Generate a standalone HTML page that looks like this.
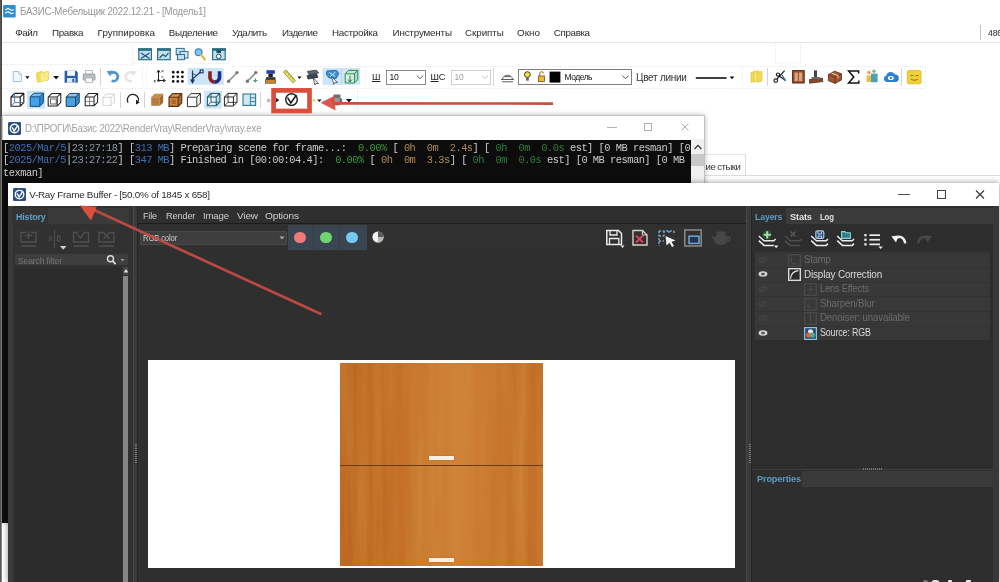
<!DOCTYPE html>
<html lang="ru">
<head>
<meta charset="utf-8">
<title>БАЗИС-Мебельщик – V-Ray Frame Buffer</title>
<style>
html,body{margin:0;padding:0;background:#fff;}
body{width:1000px;height:582px;overflow:hidden;position:relative;font-family:"Liberation Sans",sans-serif;font-size:10px;color:#222;}
#root{position:absolute;left:0;top:0;width:1000px;height:582px;overflow:hidden;background:#fff;filter:blur(0.4px);}
.a{position:absolute;}
.t{position:absolute;white-space:pre;line-height:1;}
.mi{position:absolute;top:26.7px;white-space:pre;line-height:12px;font-size:9.8px;color:#2a2a2a;letter-spacing:-0.25px;}
svg{position:absolute;overflow:visible;}
/* console */
#con{position:absolute;left:2px;top:115px;width:703px;height:407px;background:#fff;box-shadow:0 0 5px rgba(0,0,0,.28);outline:1px solid #c2c2c2;outline-offset:-1px;}
#conbody{position:absolute;left:0;top:24.6px;width:689px;height:383px;background:#0c0c0c;overflow:hidden;}
.cl{position:absolute;left:1px;margin-top:-0.6px;white-space:pre;font-family:"Liberation Mono",monospace;font-size:10.4px;letter-spacing:-0.51px;line-height:12px;color:#ccc;}
.cb{color:#3f6fb0}.cg{color:#8b97a8}.cgr{color:#3c9a3c}.co{color:#b08a55}.cdg{color:#2f7d3a}.cw{color:#d0d0d0}
/* vfb */
#vfb{position:absolute;left:8px;top:183px;width:991px;height:399px;background:#2f2f2f;box-shadow:0 0 6px rgba(0,0,0,.45);}
.vt{position:absolute;white-space:pre;line-height:1;font-size:10.5px;color:#cfcfcf;}
</style>
</head>
<body>
<div id="root">
<!-- ===== main app ===== -->
<div id="app" class="a" style="left:0;top:0;width:1000px;height:582px;background:#fff;">
  <div class="a" style="left:0;top:0;width:1px;height:582px;background:#5a5550;"></div>
  <div class="a" style="left:1px;top:0;width:1px;height:582px;background:#4a4642;"></div>
  <div class="a" style="left:1px;top:116px;width:1px;height:466px;background:#8c8c8c;"></div>
  <!-- title -->
  <svg id="appicon" width="12.8" height="12.6" style="left:3px;top:5.2px;" viewBox="0 0 13 13"><rect width="13" height="13" rx="1.2" fill="#2f8ecf"/><path d="M2.2 5.2 C4.2 3.2 5.8 3.4 7 4.6 C8.2 5.8 9.4 5.8 10.8 4.4 M2.2 8.6 C4.2 6.6 5.8 6.8 7 8 C8.2 9.2 9.4 9.2 10.8 7.8" fill="none" stroke="#fff" stroke-width="1.1"/></svg>
  <div class="t" id="apptitle" style="transform:scaleX(0.931);transform-origin:0 0;left:19.8px;top:6.9px;font-size:10.4px;color:#969696;letter-spacing:-0.2px;">БАЗИС-Мебельщик 2022.12.21 - [Модель1]</div>
  <!-- menu -->
  <div id="menu">
    <span class="mi" id="m0" style="left:15.2px;letter-spacing:-0.43px;">Файл</span>
    <span class="mi" id="m1" style="left:52px;letter-spacing:-0.32px;">Правка</span>
    <span class="mi" id="m2" style="left:97.6px;letter-spacing:0.03px;">Группировка</span>
    <span class="mi" id="m3" style="left:168.8px;letter-spacing:-0.33px;">Выделение</span>
    <span class="mi" id="m4" style="left:232px;letter-spacing:-0.4px;">Удалить</span>
    <span class="mi" id="m5" style="left:282px;letter-spacing:-0.47px;">Изделие</span>
    <span class="mi" id="m6" style="left:332px;letter-spacing:-0.28px;">Настройка</span>
    <span class="mi" id="m7" style="left:392.5px;letter-spacing:-0.16px;">Инструменты</span>
    <span class="mi" id="m8" style="left:465px;letter-spacing:-0.06px;">Скрипты</span>
    <span class="mi" id="m9" style="left:517px;letter-spacing:0.08px;">Окно</span>
    <span class="mi" id="m10" style="left:553.8px;letter-spacing:-0.36px;">Справка</span>
    <span class="mi" style="left:988px;font-size:8.7px;letter-spacing:-0.2px;top:27.2px;">486</span>
    <div class="a" style="left:979.5px;top:25px;width:1px;height:15px;background:#c4c4c4;"></div>
  </div>
  <div class="a" style="left:2px;top:42px;width:998px;height:1px;background:#e6e6e6;"></div>

  <!-- combos and labels row 2 -->
  <div class="t" style="left:372px;top:72.8px;font-size:9.2px;text-decoration:underline;color:#222;">Ш</div>
  <div class="a" style="left:386px;top:70px;width:40px;height:14.5px;border:1px solid #8a8a8a;box-sizing:border-box;background:#fff;"></div>
  <div class="t" style="left:389.5px;top:73.2px;font-size:8.6px;color:#111;letter-spacing:-0.3px;">10</div>
  <div class="t" style="left:430.5px;top:72.8px;font-size:9.2px;color:#222;letter-spacing:-0.3px;"><span style="text-decoration:underline">Ш</span>С</div>
  <div class="a" style="left:451px;top:70px;width:39.5px;height:14.5px;border:1px solid #d0d0d0;box-sizing:border-box;background:#fff;"></div>
  <div class="t" style="left:454.5px;top:73.2px;font-size:8.6px;color:#a0a0a0;letter-spacing:-0.3px;">10</div>
  <div class="a" style="left:517.5px;top:68.5px;width:114px;height:16px;border:1px solid #7f7f7f;box-sizing:border-box;background:#fff;"></div>
  <div class="t" id="t_model" style="left:564.6px;top:73.4px;font-size:8.5px;color:#111;letter-spacing:-0.52px;">Модель</div>
  <div class="t" id="t_cvet" style="left:636px;top:72.8px;font-size:10px;color:#333;letter-spacing:-0.26px;">Цвет линии</div>
<svg id="tbsvg" width="1000" height="74" style="left:0;top:42px;" viewBox="0 42 1000 74">
<g stroke="#e4e4e4" stroke-width="1" stroke-dasharray="1 1.5" fill="none">
<path d="M132.5 45 V63"/><path d="M133 63.5 H230"/><path d="M229.5 45 V63"/>
<path d="M2 64.5 H133"/><path d="M2 88.5 H925"/><path d="M142.5 67 V87"/><path d="M146.5 67 V87"/><path d="M365.5 67 V87"/><path d="M742.5 67 V87"/><path d="M925.5 66 V88"/><path d="M230 66.5 H925"/>
<path d="M775.5 43 V63 H800.5 V43"/>
</g>
<rect x="138.79999999999998" y="48.9" width="12.6" height="10.8" fill="#bfe0f2" stroke="#2d6f86" stroke-width="1.2"/><rect x="138.2" y="48.3" width="13.8" height="2.6" fill="#2d6f86"/><path d="M141 53 L149.5 58.5 M149.5 53 L141 58.5" stroke="#1f4f66" stroke-width="1.1"/>
<rect x="157.6" y="48.9" width="12.6" height="10.8" fill="#bfe0f2" stroke="#2d6f86" stroke-width="1.2"/><rect x="157" y="48.3" width="13.8" height="2.6" fill="#2d6f86"/><path d="M159.5 58 L163 54.5 L165.5 56.5 L168.5 52.8" stroke="#1f4f66" stroke-width="1.1" fill="none"/>
<g><rect x="176.2" y="48.4" width="8" height="6.5" fill="#bfe0f2" stroke="#2d6f86" stroke-width="1"/><rect x="180" y="51.6" width="8" height="6.5" fill="#cfe8f5" stroke="#2d6f86" stroke-width="1"/><rect x="177.5" y="54.5" width="7" height="5.2" fill="#bfe0f2" stroke="#2d6f86" stroke-width="1"/></g>
<g><circle cx="198.6" cy="52.2" r="3.4" fill="#7fc4ee" stroke="#3f86bd" stroke-width="1.2"/><path d="M201 55 L205 59.5" stroke="#e0b84a" stroke-width="2.2" stroke-linecap="round"/></g>
<rect x="212.6" y="48.9" width="12.6" height="10.8" fill="#bfe0f2" stroke="#2d6f86" stroke-width="1.2"/><rect x="212" y="48.3" width="13.8" height="2.6" fill="#2d6f86"/><rect x="216.4" y="49.8" width="4.6" height="3.2" fill="#1f4f66"/><circle cx="218.7" cy="56.4" r="2.3" fill="#f5f5f5" stroke="#1f4f66" stroke-width="1"/>
<path d="M13.2 71.5 H18.8 L21.4 74.2 V81.6 H13.2 Z" fill="#f1f8fd" stroke="#9fc3de" stroke-width="1"/><path d="M18.8 71.5 V74.2 H21.4" fill="#d7e9f5" stroke="#9fc3de" stroke-width="0.8"/>
<path d="M25.3 76.3 H29.5 L27.4 78.9 Z" fill="#111"/>
<path d="M36.4 73.2 L42 71.2 L42.8 72.6 L48.4 71.4 L48.4 80 L37.4 82.2 Z" fill="#f2dc5c" stroke="#e4c83c" stroke-width="0.8"/><path d="M40.5 73.6 L48.4 71.6 V80 L40.8 81.6 Z" fill="#f8e98a"/>
<path d="M53.2 76 H59 L56.1 79.4 Z" fill="#111"/>
<path d="M64.6 70.8 H76 L77.8 72.6 V82.8 H64.6 Z" fill="#2c5f9e"/><rect x="67.2" y="70.8" width="7.8" height="5" fill="#f4f7fb"/><rect x="67" y="78" width="8.4" height="4.8" fill="#dfe8f2"/><rect x="72.3" y="78.6" width="2" height="3.6" fill="#2c5f9e"/>
<rect x="85.6" y="70.6" width="7" height="4" fill="#fafafa" stroke="#a9b0b6" stroke-width="0.8"/><rect x="83.2" y="74" width="11.8" height="6.2" rx="1" fill="#b8bfc6" stroke="#8e969d" stroke-width="0.8"/><rect x="85.6" y="78" width="7" height="4.4" fill="#fafafa" stroke="#a9b0b6" stroke-width="0.8"/>
<path d="M100.5 68 V86" stroke="#d5d5d5" stroke-width="1"/>
<path d="M110 73.2 C115.5 70.6 119.2 74.6 117.4 78.6 C116.4 80.8 113.6 81.6 111.6 80.8" fill="none" stroke="#4d95cc" stroke-width="2.6"/><path d="M106.6 71.2 L112.6 70.6 L110.4 76.6 Z" fill="#4d95cc"/>
<path d="M133.6 73.2 C128.1 70.6 124.4 74.6 126.2 78.6 C127.2 80.8 130 81.6 132 80.8" fill="none" stroke="#e3e5e7" stroke-width="2.6"/><path d="M137 71.2 L131 70.6 L133.2 76.6 Z" fill="#e3e5e7"/>
<g stroke="#222" stroke-width="1" fill="none"><path d="M158.5 71 V80.5 H164.5"/><path d="M157 72.5 L158.5 70 L160 72.5 M163 79 L165.5 80.5 L163 82"/></g><circle cx="158.5" cy="80.5" r="1.3" fill="#222"/><g font-size="4.5" font-family="Liberation Sans, sans-serif" fill="#222"></g><path d="M161.5 70.2 l2 2 m0 -2 l-2 2 M154 80 l1.6 2.4 m0 -2.4 l-1.6 2.4 M161 77 l2.4 0" stroke="#333" stroke-width="0.7"/>
<circle cx="173.2" cy="72.2" r="1.35" fill="#111"/>
<circle cx="173.2" cy="76.8" r="1.35" fill="#111"/>
<circle cx="173.2" cy="81.4" r="1.35" fill="#111"/>
<circle cx="177.79999999999998" cy="72.2" r="1.35" fill="#111"/>
<circle cx="177.79999999999998" cy="76.8" r="1.35" fill="#111"/>
<circle cx="177.79999999999998" cy="81.4" r="1.35" fill="#111"/>
<circle cx="182.39999999999998" cy="72.2" r="1.35" fill="#111"/>
<circle cx="182.39999999999998" cy="76.8" r="1.35" fill="#111"/>
<circle cx="182.39999999999998" cy="81.4" r="1.35" fill="#111"/>
<rect x="187.7" y="68" width="36" height="16.8" fill="#cde5f7"/>
<g stroke="#1d3a6e" fill="none" stroke-width="1.2"><path d="M192.5 70.5 V82"/><path d="M190.7 79.5 L192.5 82.8 L194.3 79.5" fill="#1d3a6e"/><path d="M192.5 79 L200.5 72"/><rect x="200.2" y="70" width="2.8" height="2.8" fill="#fff"/><path d="M193 74 A6 6 0 0 1 197 76" stroke-width="0.8"/></g>
<path d="M210 71.2 V78 A4.7 4.7 0 0 0 214.8 82 " fill="none" stroke="#8b1f24" stroke-width="3.6"/><path d="M219.5 71.2 V78 A4.7 4.7 0 0 1 214.7 82" fill="none" stroke="#1c2a8c" stroke-width="3.6"/>
<path d="M228.4 81.4 L237.2 72.4" stroke="#8a8a8a" stroke-width="1.5"/><circle cx="228.6" cy="81.2" r="1.7" fill="#777"/><circle cx="237" cy="72.6" r="1.7" fill="#777"/>
<path d="M247.2 81.4 L256 72.4" stroke="#8a8a8a" stroke-width="1.5"/><circle cx="247.4" cy="81.2" r="1.7" fill="#777"/><circle cx="255.8" cy="72.6" r="1.7" fill="#777"/><path d="M255.4 78.6 V82.6 M253.4 80.6 H257.4" stroke="#3f9e6a" stroke-width="1.2"/>
<rect x="266.4" y="70.2" width="8.4" height="3.6" fill="#2b3fa8"/><rect x="268.4" y="73.8" width="4.4" height="3.4" fill="#222"/><rect x="266" y="77.2" width="9.4" height="2.6" fill="#333"/><rect x="265.6" y="79.8" width="10" height="3.4" fill="#d58a2c" stroke="#333" stroke-width="0.6"/>
<path d="M283.4 72 L285.8 70 L295.4 80.6 L293 82.8 Z" fill="#f0e060" stroke="#8a8a30" stroke-width="0.9"/><path d="M286 72.6 l1.4 -1.2 M288 74.8 l1.4 -1.2 M290 77 l1.4 -1.2 M292 79.2 l1.4 -1.2" stroke="#6a6a20" stroke-width="0.7"/>
<path d="M297.4 76.4 H301.6 L299.5 79 Z" fill="#111"/>
<path d="M307.4 71.4 L316.4 70.2 L318.6 73 L309 74.6 Z" fill="#5a6a7a" stroke="#222" stroke-width="0.7"/><path d="M307 75.6 L316.6 74 L318 77.4 L308 79 Z" fill="#3a4a5a" stroke="#222" stroke-width="0.7"/><path d="M313 77.5 L318.5 83.5 L316 83.3 L315 85 Z" fill="#fff" stroke="#222" stroke-width="0.7"/>
<rect x="322.5" y="68" width="37.5" height="16.8" fill="#cde5f7"/><path d="M341.5 68 V84.8" stroke="#b5d4ea" stroke-width="0.8"/>
<path d="M327 71 L336.4 70.4 L338.8 73.4 L336 78.6 L329 77.8 L326.4 74.4 Z" fill="#3d8fd6" stroke="#1e5fa0" stroke-width="0.9"/><path d="M329.5 72.5 L335 76.5 M335.5 72 L330 76.8" stroke="#d8ecfa" stroke-width="1"/><path d="M331.5 76.5 L337.6 82.6 L334.8 82.6 L333.8 84.4 Z" fill="#fff" stroke="#1e3a5a" stroke-width="0.7"/>
<path d="M345.2 73.80000000000001 L348.59999999999997 70.4 H357.79999999999995 L354.4 73.80000000000001 Z" fill="#c2e8d2"/><path d="M354.4 73.80000000000001 L357.79999999999995 70.4 V79.60000000000001 L354.4 83.00000000000001 Z" fill="#a8dcc0"/><rect x="345.2" y="73.80000000000001" width="9.2" height="9.2" fill="#d9f2e4"/><path d="M345.2 73.80000000000001 H354.4 V83.00000000000001 H345.2 Z M345.2 73.80000000000001 L348.59999999999997 70.4 H357.79999999999995 L354.4 73.80000000000001 M357.79999999999995 70.4 V79.60000000000001 L354.4 83.00000000000001" fill="none" stroke="#2d8a5a" stroke-width="1.0" stroke-linejoin="round"/>
<path d="M350 75.5 V81.5 M348.2 79.6 L350 82 L351.8 79.6" stroke="#1f5a3c" stroke-width="0.9" fill="none"/>
<path d="M11 97.0 H20.2 V106.2 H11 Z M11 97.0 L14.6 93.4 H23.799999999999997 L20.2 97.0 M23.799999999999997 93.4 V102.60000000000001 L20.2 106.2" fill="none" stroke="#1b1b1b" stroke-width="1.15" stroke-linejoin="round"/><path d="M14.6 93.4 V102.60000000000001 H23.799999999999997 M14.6 102.60000000000001 L11 106.2" fill="none" stroke="#3b7fb8" stroke-width="0.9774999999999999"/>
<rect x="27" y="90.7" width="18" height="18" fill="#cde5f7"/>
<path d="M30.2 96.8 L33.8 93.2 H43.4 L39.8 96.8 Z" fill="#6fbdf2"/><path d="M39.8 96.8 L43.4 93.2 V102.8 L39.8 106.39999999999999 Z" fill="#2f8ad0"/><rect x="30.2" y="96.8" width="9.6" height="9.6" fill="#3fa2ea"/><path d="M30.2 96.8 H39.8 V106.39999999999999 H30.2 Z M30.2 96.8 L33.8 93.2 H43.4 L39.8 96.8 M43.4 93.2 V102.8 L39.8 106.39999999999999" fill="none" stroke="#1b4b78" stroke-width="1.0" stroke-linejoin="round"/>
<path d="M48.2 97.0 H57.2 V106.0 H48.2 Z M48.2 97.0 L51.800000000000004 93.4 H60.800000000000004 L57.2 97.0 M60.800000000000004 93.4 V102.4 L57.2 106.0" fill="none" stroke="#222" stroke-width="1.05" stroke-linejoin="round"/>
<rect x="50.6" y="99" width="5.6" height="5" fill="none" stroke="#444" stroke-width="0.8"/>
<path d="M66.2 97.0 L69.8 93.4 H79.2 L75.60000000000001 97.0 Z" fill="#8ac6ee"/><path d="M75.60000000000001 97.0 L79.2 93.4 V102.80000000000001 L75.60000000000001 106.4 Z" fill="#3b8ccc"/><rect x="66.2" y="97.0" width="9.4" height="9.4" fill="#4aa3de"/><path d="M66.2 97.0 H75.60000000000001 V106.4 H66.2 Z M66.2 97.0 L69.8 93.4 H79.2 L75.60000000000001 97.0 M79.2 93.4 V102.80000000000001 L75.60000000000001 106.4" fill="none" stroke="#1b3b58" stroke-width="1.0" stroke-linejoin="round"/>
<path d="M85.2 97.0 H94.0 V105.8 H85.2 Z M85.2 97.0 L88.8 93.4 H97.6 L94.0 97.0 M97.6 93.4 V102.2 L94.0 105.8" fill="none" stroke="#222" stroke-width="1.05" stroke-linejoin="round"/>
<path d="M89.6 97 V105.8 M85.2 101.4 H94" stroke="#555" stroke-width="0.7"/>
<path d="M103 97.4 H111 V105.4 H103 Z M103 97.4 L106.4 94 H114.4 L111 97.4 M114.4 94 V102 L111 105.4" fill="none" stroke="#d2d2d2" stroke-width="1.0" stroke-linejoin="round"/>
<path d="M120.5 92 V108" stroke="#d5d5d5" stroke-width="1"/>
<path d="M128 102.6 A5.6 5.6 0 1 1 138.4 101" fill="none" stroke="#222" stroke-width="1.3"/><path d="M136.2 99.4 L139.6 102.4 L136 104.6 Z" fill="#111"/>
<path d="M144.5 92 V108" stroke="#d5d5d5" stroke-width="1"/>
<path d="M151.2 97.2 L154.6 93.8 H163.2 L159.79999999999998 97.2 Z" fill="#c28c4c"/><path d="M159.79999999999998 97.2 L163.2 93.8 V102.39999999999999 L159.79999999999998 105.8 Z" fill="#a06c30"/><rect x="151.2" y="97.2" width="8.6" height="8.6" fill="#b57e3e"/>
<path d="M169 97.19999999999999 L172.6 93.6 H181.79999999999998 L178.2 97.19999999999999 Z" fill="#d89a52"/><path d="M178.2 97.19999999999999 L181.79999999999998 93.6 V102.8 L178.2 106.39999999999999 Z" fill="#a8682a"/><rect x="169" y="97.19999999999999" width="9.2" height="9.2" fill="#c8863e"/><path d="M169 97.19999999999999 H178.2 V106.39999999999999 H169 Z M169 97.19999999999999 L172.6 93.6 H181.79999999999998 L178.2 97.19999999999999 M181.79999999999998 93.6 V102.8 L178.2 106.39999999999999" fill="none" stroke="#5a2f10" stroke-width="1.1" stroke-linejoin="round"/>
<rect x="171.6" y="99.6" width="4.4" height="4.4" fill="#a8682a"/>
<path d="M187.4 97.19999999999999 L191.0 93.6 H200.4 L196.8 97.19999999999999 Z" fill="#fff"/><path d="M196.8 97.19999999999999 L200.4 93.6 V103.0 L196.8 106.6 Z" fill="#f2f2f2"/><rect x="187.4" y="97.19999999999999" width="9.4" height="9.4" fill="#fff"/><path d="M187.4 97.19999999999999 H196.8 V106.6 H187.4 Z M187.4 97.19999999999999 L191.0 93.6 H200.4 L196.8 97.19999999999999 M200.4 93.6 V103.0 L196.8 106.6" fill="none" stroke="#333" stroke-width="1.0" stroke-linejoin="round"/>
<rect x="204.2" y="90.7" width="17.6" height="18" fill="#cde5f7"/>
<path d="M207.4 97.0 L211.0 93.4 H219.8 L216.20000000000002 97.0 Z" fill="#d8eefa"/><path d="M216.20000000000002 97.0 L219.8 93.4 V102.2 L216.20000000000002 105.8 Z" fill="#c2e2f3"/><rect x="207.4" y="97.0" width="8.8" height="8.8" fill="#e4f3fb"/><path d="M207.4 97.0 H216.20000000000002 V105.8 H207.4 Z M207.4 97.0 L211.0 93.4 H219.8 L216.20000000000002 97.0 M219.8 93.4 V102.2 L216.20000000000002 105.8" fill="none" stroke="#20586a" stroke-width="1.05" stroke-linejoin="round"/><path d="M211.0 93.4 V102.2 H219.8 M211.0 102.2 L207.4 105.8" fill="none" stroke="#20586a" stroke-width="0.8925"/>
<path d="M224.4 97.0 H233.4 V106.0 H224.4 Z M224.4 97.0 L228.0 93.4 H237.0 L233.4 97.0 M237.0 93.4 V102.4 L233.4 106.0" fill="none" stroke="#222" stroke-width="1.0" stroke-linejoin="round"/><path d="M228.0 93.4 V102.4 H237.0 M228.0 102.4 L224.4 106.0" fill="none" stroke="#222" stroke-width="0.85"/>
<rect x="243" y="94" width="12.6" height="11.4" fill="#cfe8f6" stroke="#2d7a92" stroke-width="1.1"/><path d="M250.4 94 V105.4 M250.4 97.8 H255.6 M250.4 101.6 H255.6" stroke="#2d7a92" stroke-width="0.9"/>
<path d="M260.5 92 V108" stroke="#d5d5d5" stroke-width="1"/>
<circle cx="268.6" cy="100.4" r="2" fill="#b9c0c8"/>
<path d="M275.8 97.8 L279.4 100.2 L275.8 102.6 Z" fill="#222"/>
<circle cx="291.5" cy="99.6" r="5.8" fill="#fff" stroke="#1a1a1a" stroke-width="1.4"/><path d="M287.6 97.6 L290.8 103 L296.4 95" fill="none" stroke="#1a1a1a" stroke-width="1.5"/>
<circle cx="314" cy="100.4" r="1.4" fill="#ecd270"/>
<path d="M317.2 99.4 H321.6 L319.4 102 Z" fill="#111"/>
<g fill="#6f6f6f"><ellipse cx="337" cy="101" rx="5.4" ry="4.6"/><rect x="333.4" y="94.4" width="7.2" height="2.6" rx="1"/></g><rect x="333.6" y="98" width="6" height="5" fill="#9a9a9a"/>
<path d="M346 99 H352 L349 102.6 Z" fill="#111"/>
<g stroke="#dcdcdc" stroke-width="1" stroke-dasharray="1 1.5" fill="none"><path d="M357.5 91 V110"/></g>
<g fill="none" stroke="#4a4a4a" stroke-width="0.9"><path d="M501 79.5 H514 M502 81.8 H513"/><path d="M502.6 79 C503 74 512 74 512.4 79" /><path d="M504.5 76.6 H510.5"/></g>
<path d="M493.5 68 V86" stroke="#d5d5d5" stroke-width="1"/>
<circle cx="527.4" cy="74.6" r="2.9" fill="#f6e24a" stroke="#222" stroke-width="0.9"/><rect x="526" y="77.6" width="2.8" height="3" fill="#666"/>
<rect x="538.6" y="76" width="6" height="5.4" fill="#f0b83a" stroke="#7a4a10" stroke-width="0.8"/><path d="M539.8 76 V73.6 A1.8 1.8 0 0 1 543.4 73.4" fill="none" stroke="#b06a1a" stroke-width="1.1"/>
<rect x="549.6" y="71.6" width="10.8" height="11" fill="#000"/>
<g fill="none" stroke="#444" stroke-width="0.9"><path d="M416.8 75.6 L420 78.6 L423.2 75.6"/><path d="M622.4 75.6 L625.6 78.6 L628.8 75.6"/></g><path d="M481.6 75.6 L484.8 78.6 L488 75.6" fill="none" stroke="#c4c4c4" stroke-width="0.9"/>
<path d="M695.8 78 H726.6" stroke="#111" stroke-width="1.6"/><path d="M729.6 76.4 H734.4 L732 79.2 Z" fill="#111"/>
<path d="M751 72.6 L755.6 71.2 V81 L751 82.4 Z" fill="#f3dc55" stroke="#d8be3a" stroke-width="0.6"/><path d="M754 71.8 L758.8 70.6 V80.6 L754 82 Z" fill="#f7e56e" stroke="#d8be3a" stroke-width="0.6"/><path d="M757.4 72.4 L762 71.4 V81 L757.4 82.4 Z" fill="#f3dc55" stroke="#d8be3a" stroke-width="0.6"/>
<path d="M767.5 68 V86" stroke="#d5d5d5" stroke-width="1"/>
<g stroke="#222" stroke-width="1.2" fill="none"><path d="M777 79 L784.6 70.6 M779.2 76 L785.6 80.4"/><circle cx="775.8" cy="80.6" r="1.8"/><circle cx="778" cy="74.6" r="1.6"/></g><path d="M782 75 l3.6 5.8" stroke="#3a6ea8" stroke-width="1.4"/>
<rect x="792.6" y="70.6" width="11.6" height="12.4" fill="#a0522d" stroke="#4a2a18" stroke-width="1"/><rect x="794.6" y="72.6" width="3.2" height="8.4" fill="#d8a884"/><rect x="799" y="72.6" width="3.2" height="8.4" fill="#d8a884"/>
<rect x="814" y="70.4" width="3" height="7.6" fill="#444"/><path d="M809.4 79.6 L822.4 78 L822.8 81.6 L809.6 83.2 Z" fill="#8a4a2a" stroke="#3a2014" stroke-width="0.7"/><rect x="811.6" y="77" width="8" height="2.2" fill="#6a6a6a"/>
<path d="M828.4 74.6 L834.6 71.2 L841.4 73.8 L841.4 80 L835 83.4 L828.4 80.6 Z" fill="#a5562e" stroke="#4a2412" stroke-width="0.8"/><path d="M828.4 74.6 L835 77.2 L841.4 73.8 M835 77.2 V83.4" stroke="#4a2412" stroke-width="0.7" fill="none"/><path d="M831.5 73 L838 75.6 V78" stroke="#e8d8b8" stroke-width="1" fill="none"/>
<path d="M858.6 73.4 V71 H848.6 L853.8 77 L848.6 83 H858.8 V80.4" fill="none" stroke="#111" stroke-width="1.5"/>
<rect x="866.6" y="75.4" width="5" height="6.6" fill="#e8c040"/><rect x="871" y="73.6" width="6.6" height="8.6" fill="#4aa0b8"/><circle cx="869" cy="72.6" r="1.8" fill="#e8a070"/><circle cx="874" cy="71.2" r="1.7" fill="#7ac070"/>
<path d="M886.6 82 A3.4 3.4 0 0 1 886.4 75.4 A4.6 4.6 0 0 1 895 74.6 A3.7 3.7 0 0 1 895.2 82 Z" fill="#2a7fd0"/><ellipse cx="890.8" cy="78" rx="3" ry="2" fill="#fff"/><circle cx="890.8" cy="78" r="1.1" fill="#1a4f90"/>
<path d="M901.5 68 V86" stroke="#d5d5d5" stroke-width="1"/>
<rect x="907.4" y="70.6" width="13.6" height="13.2" rx="1.5" fill="#f2d038" stroke="#dcb820" stroke-width="0.8"/><path d="M910.4 75.6 H913.4 M915.4 75.6 H918.4 M911 79 C913 80.6 916 80.6 918 79" stroke="#8a6a10" stroke-width="1" fill="none"/>
</svg>
  <div class="a" style="left:700px;top:154px;width:46px;height:21px;border-right:1px solid #dadada;border-top:1px solid #e6e6e6;box-sizing:border-box;"></div>
  <div class="a" style="left:700px;top:175px;width:300px;height:1px;background:#dcdcdc;"></div>
  <div class="t" id="t_tab" style="left:705.6px;top:162px;font-size:9.6px;color:#333;letter-spacing:-0.55px;">ие стыки</div>
</div>
<!-- ===== console window ===== -->
<div id="con">
  <svg width="13" height="13" style="left:6.4px;top:7.4px;" viewBox="0 0 14 14"><rect width="14" height="14" rx="1.5" fill="#2a4f86"/><circle cx="7" cy="7" r="4.6" fill="none" stroke="#fff" stroke-width="1.5"/><path d="M4.2 5.6 L6.6 9.6 L10.6 3.6" fill="none" stroke="#fff" stroke-width="1.5"/></svg>
  <div class="t" style="transform:scaleX(0.943);transform-origin:0 0;left:23.2px;top:8.6px;font-size:10.3px;color:#a2a2a2;letter-spacing:-0.2px;" id="contt">D:\ПРОГИ\Базис 2022\RenderVray\RenderVray\vray.exe</div>
  <svg width="100" height="23" style="left:600px;top:1px;" viewBox="0 0 100 23"><path d="M5 11.5 H15" stroke="#b0b0b0" stroke-width="1"/><rect x="42.5" y="7.5" width="7" height="7" fill="none" stroke="#b0b0b0" stroke-width="1"/><path d="M79.5 7.5 L86.5 14.5 M86.5 7.5 L79.5 14.5" stroke="#b0b0b0" stroke-width="1"/></svg>
  <div class="a" style="left:689px;top:24px;width:13px;height:44px;background:#f0f0f0;"></div>
  <div class="a" style="left:689px;top:39px;width:13px;height:12px;background:#c9c9c9;"></div>
  <svg width="14" height="10" style="left:688.5px;top:27px;" viewBox="0 0 14 10"><path d="M3.6 7 L7 3.4 L10.4 7" fill="none" stroke="#333" stroke-width="1.3"/></svg>
  <div id="conbody">
    <div class="cl" style="top:3px">[<span class="cb">2025/Mar/5</span>|<span class="cg">23:27:18</span>] [<span class="cb">313 MB</span>] Preparing scene for frame...:  <span class="cgr">0.00%</span> [ <span class="co">0h</span>  <span class="co">0m</span>  <span class="co">2.4s</span>] [ <span class="cdg">0h</span>  <span class="cdg">0m</span>  <span class="cdg">0.0s</span> est] [0 MB resman] [0</div>
    <div class="cl" style="top:15px">[<span class="cb">2025/Mar/5</span>|<span class="cg">23:27:22</span>] [<span class="cb">347 MB</span>] Finished in [00:00:04.4]:  <span class="cgr">0.00%</span> [ <span class="co">0h</span>  <span class="co">0m</span>  <span class="co">3.3s</span>] [ <span class="cdg">0h</span>  <span class="cdg">0m</span>  <span class="cdg">0.0s</span> est] [0 MB resman] [0 MB</div>
    <div class="cl" style="top:28px">texman]</div>
  </div>
</div>
<!-- ===== V-Ray frame buffer ===== -->
<div id="vfb">
  <div id="vfbtitle" class="a" style="left:0;top:0;width:991px;height:23px;background:#fff;">
    <svg id="vricon" width="13" height="13.2" style="left:5.4px;top:4.6px;" viewBox="0 0 14 14"><rect width="14" height="14" rx="1.5" fill="#2a4f86"/><circle cx="7" cy="7" r="4.6" fill="none" stroke="#fff" stroke-width="1.5"/><path d="M4.2 5.6 L6.6 9.6 L10.6 3.6" fill="none" stroke="#fff" stroke-width="1.5"/></svg>
    <div class="t" style="left:21.2px;top:6.5px;font-size:9.9px;color:#2c2c2c;letter-spacing:-0.27px;" id="vfbtt">V-Ray Frame Buffer - [50.0% of 1845 x 658]</div>
    <svg width="100" height="23" style="left:880px;top:0;" viewBox="0 0 100 23"><path d="M10 11.5 H22" stroke="#555" stroke-width="1"/><rect x="49.5" y="7.5" width="8" height="8" fill="none" stroke="#444" stroke-width="1"/><path d="M88 7.5 L96 15.5 M96 7.5 L88 15.5" stroke="#333" stroke-width="1.1"/></svg>
  </div>
  <!-- left: history -->
  <div id="hist" class="a" style="left:0;top:23px;width:125px;height:376px;background:#313131;">
    <div class="a" style="left:0;top:0;width:4.5px;height:376px;background:#3a3a3a;"></div>
    <div class="a" style="left:4px;top:2px;width:117px;height:16px;background:#3a3a3a;"></div>
    <div class="a" style="left:4px;top:2px;width:36px;height:16px;background:#333;"></div>
    <div class="vt" id="t_hist" style="transform:scaleX(0.946);transform-origin:0 0;left:7.8px;top:6.3px;font-weight:bold;color:#5fa3c9;font-size:9.4px;letter-spacing:-0.15px;">History</div>
    <div class="a" style="left:7px;top:48px;width:113px;height:11px;background:#3e3e3e;border-radius:1px;"></div>
    <div class="vt" id="t_search" style="transform:scaleX(0.912);transform-origin:0 0;left:10px;top:50.2px;color:#757575;font-size:9.4px;letter-spacing:-0.15px;">Search filter</div>
    <div class="a" style="left:7px;top:61px;width:107px;height:315px;background:#2c2c2c;"></div>
    <div class="a" style="left:115px;top:61px;width:5px;height:8px;background:#444;"></div>
    <div class="a" style="left:115px;top:70px;width:5px;height:306px;background:#868686;"></div>

    <svg width="125" height="30" style="left:0;top:22px;" viewBox="0 0 125 30" fill="none" stroke="#505050" stroke-width="1.3">
      <path d="M18 4.5 H13 V14 H28 V4.5 H23 M13 18 H28"/><path d="M20.5 3.5 V11 M17 7.5 H24" />
      <path d="M46.5 2 V20" stroke-width="1"/><path d="M41 13 L42.5 8 L44 13 M49.5 8 V13 H52 V8 Z" stroke-width="1"/>
      <path d="M52 18 H58.5 L55.2 21.8 Z" fill="#cfcfcf" stroke="none"/>
      <path d="M70 4.5 H65.5 V14 H80.5 V4.5 H76 M65.5 18 H80.5"/><path d="M69.5 6.5 L72.5 10 L76.5 4.5"/>
      <path d="M95.5 4.5 H91 V14 H106 V4.5 H101.5 M91 18 H106"/><path d="M95.5 4.5 L101.5 11 M101.5 4.5 L95.5 11"/>
    </svg>
    <svg width="30" height="12" style="left:97px;top:47.5px;" viewBox="0 0 30 12"><circle cx="5.5" cy="4.8" r="3" fill="none" stroke="#dcdcdc" stroke-width="1.4"/><path d="M7.8 7.2 L10.6 10.2" stroke="#dcdcdc" stroke-width="1.8"/><path d="M15.5 5 H19.5 L17.5 7.5 Z" fill="#9a9a9a"/></svg>
    <svg width="6" height="8" style="left:115px;top:61px;" viewBox="0 0 6 8"><path d="M0.6 5.5 L3 2 L5.4 5.5 Z" fill="#e0e0e0"/></svg>
  </div>
  <!-- splitter -->
  <div class="a" style="left:125px;top:23px;width:5px;height:376px;background:#3a3a3a;border-left:1px solid #484848;border-right:1px solid #262626;box-sizing:border-box;"></div>
  <!-- center -->
  <div id="ctr" class="a" style="left:130px;top:23px;width:608px;height:376px;background:#2f2f2f;">
    <div class="a" style="left:0;top:0;width:608px;height:17px;background:#2f2f2f;border-bottom:1px solid #1c1c1c;"></div>
    <div class="vt" id="t_file" style="transform:scaleX(0.919);transform-origin:0 0;left:5.4px;top:5.4px;font-size:9.8px;letter-spacing:-0.15px;">File</div>
    <div class="vt" id="t_render" style="transform:scaleX(0.937);transform-origin:0 0;left:27.6px;top:5.4px;font-size:9.8px;letter-spacing:-0.15px;">Render</div>
    <div class="vt" id="t_image" style="transform:scaleX(0.976);transform-origin:0 0;left:65px;top:5.4px;font-size:9.8px;letter-spacing:-0.15px;">Image</div>
    <div class="vt" id="t_view" style="transform:scaleX(1.018);transform-origin:0 0;left:99px;top:5.4px;font-size:9.8px;letter-spacing:-0.15px;">View</div>
    <div class="vt" id="t_options" style="transform:scaleX(1.034);transform-origin:0 0;left:127px;top:5.4px;font-size:9.8px;letter-spacing:-0.15px;">Options</div>
    <div class="a" style="left:0;top:18px;width:608px;height:28px;background:#303030;"></div>
    <div class="a" style="left:2px;top:24.6px;width:146.5px;height:14px;background:#3e3e3e;border:1px solid #4a4a4a;box-sizing:border-box;border-radius:1px;"></div>
    <svg width="6" height="4" style="left:140.5px;top:30.4px;" viewBox="0 0 6 4"><path d="M0.4 0.4 H5.6 L3 3.6 Z" fill="#a8a8a8"/></svg>
    <div class="vt" id="t_rgb" style="transform:scaleX(0.868);transform-origin:0 0;left:5.4px;top:27.6px;font-size:8.8px;letter-spacing:-0.15px;color:#d0d0d0;">RGB color</div>
    <div class="a" style="left:150px;top:19px;width:79px;height:25.4px;background:#3b4551;"></div>
    <div class="a" style="left:175px;top:19px;width:1px;height:26px;background:#333d47;"></div>
    <div class="a" style="left:201px;top:19px;width:1px;height:26px;background:#333d47;"></div>
    <div class="a" style="left:156.3px;top:25.6px;width:11.4px;height:11.4px;border-radius:6px;background:radial-gradient(circle at 50% 50%,#f07a7a 0,#f07a7a 60%,#f07a7add 100%);"></div>
    <div class="a" style="left:182.3px;top:25.6px;width:11.4px;height:11.4px;border-radius:6px;background:radial-gradient(circle at 50% 50%,#6fd66f 0,#6fd66f 60%,#6fd66fdd 100%);"></div>
    <div class="a" style="left:208.3px;top:25.6px;width:11.4px;height:11.4px;border-radius:6px;background:radial-gradient(circle at 50% 50%,#76c8f0 0,#76c8f0 60%,#76c8f0dd 100%);"></div>

    <svg width="16" height="16" style="left:232.4px;top:23.4px;" viewBox="0 0 16 16"><circle cx="8" cy="8" r="5.6" fill="#f0f0f0"/><path d="M8 8 V2.4 A5.6 5.6 0 0 1 13.6 8 Z" fill="#5a5a5a"/><path d="M8 8 H13.6 A5.6 5.6 0 0 1 8 13.6 Z" fill="#b4b4b4"/></svg>
    <svg width="140" height="24" style="left:464px;top:20px;" viewBox="0 0 140 24" fill="none">
      <path d="M4.8 4.5 H16.5 L19.5 7.5 V18.5 H4.8 Z" stroke="#ececec" stroke-width="1.5"/><path d="M8 4.5 V9 H15 V4.5 M7.5 18.5 V12.5 H16.8 V18.5" stroke="#ececec" stroke-width="1.3"/><path d="M18.5 19.5 H22.5 L20.5 22 Z" fill="#ececec"/>
      <path d="M31 4.5 H40.5 L45 9 V19 H31 Z" stroke="#dccfcf" stroke-width="1.4"/><path d="M40.5 4.5 V9 H45" stroke="#dccfcf" stroke-width="1.2"/><path d="M34 9.5 L41 16.5 M41 9.5 L34 16.5" stroke="#d8415f" stroke-width="2"/>
      <path d="M57 5 H72 M57 5 V20 M57 10 H62 M57 15 H62 M62 5 V10 M67 5 V8 M72 5 V8" stroke="#6ea3cc" stroke-width="1.6" stroke-dasharray="2 1.6"/>
      <path d="M63.5 10 L73.5 14.5 L69.5 15.8 L72 20 L70 21 L67.6 16.8 L64.5 19.5 Z" fill="#f2f2f2"/>
      <rect x="82.8" y="4" width="16.4" height="16" stroke="#8c8c8c" stroke-width="1.5"/><rect x="87" y="10.2" width="10" height="7.2" fill="#1f3550" stroke="#6fa6d6" stroke-width="1.5"/>
      <g fill="#474747"><ellipse cx="119" cy="13.5" rx="6.8" ry="5.6"/><rect x="114.5" y="5.5" width="9" height="3" rx="1.2"/><path d="M110.5 10 L113.5 12.5 L113.5 15.5 L109.5 11 Z"/><path d="M125 11 C130 8.5 130 17 125 16 V14.6 C128 15 128 11.5 125 12.4 Z"/></g>
    </svg>
    <!-- viewport image -->
    <div id="img" class="a" style="left:10px;top:154px;width:587px;height:208px;background:#fff;">
      <div id="cab" class="a" style="left:191.5px;top:3.3px;width:203px;height:202.7px;background:linear-gradient(90deg,#bb6521 0%,#bf6924 16%,#c6732b 36%,#cf8138 56%,#c97830 72%,#c06b26 100%);">
        <svg width="203" height="203" style="left:0;top:0;" viewBox="0 0 203 203"><filter id="wood" x="0" y="0" width="100%" height="100%"><feTurbulence type="fractalNoise" baseFrequency="0.09 0.004" numOctaves="3" seed="7"/><feColorMatrix type="matrix" values="0 0 0 0 0.62  0 0 0 0 0.25  0 0 0 0 0.04  1.4 0 0 0 -0.5"/></filter><rect width="203" height="203" filter="url(#wood)"/></svg>
        <div class="a" style="left:0;top:101.6px;width:203px;height:1.1px;background:#6e3a12;"></div>
        <div class="a" style="left:89.5px;top:93px;width:25px;height:4.2px;background:#f6f1e4;box-shadow:0 0 1px #7a4a1a;"></div>
        <div class="a" style="left:89.5px;top:194.6px;width:25px;height:4.2px;background:#f6f1e4;box-shadow:0 0 1px #7a4a1a;"></div>
      </div>
    </div>
  </div>
  <!-- right splitter -->
  <div class="a" style="left:738px;top:23px;width:6px;height:376px;background:#3a3a3a;border-left:1px solid #484848;border-right:1px solid #262626;box-sizing:border-box;"></div>
  <svg width="4" height="20" style="left:126px;top:261px;" viewBox="0 0 4 20"><path d="M2 0 V20" stroke="#8a8a8a" stroke-width="1.6" stroke-dasharray="1 1"/></svg>
  <svg width="4" height="20" style="left:739.5px;top:261px;" viewBox="0 0 4 20"><path d="M2 0 V20" stroke="#8a8a8a" stroke-width="1.6" stroke-dasharray="1 1"/></svg>
  <!-- right panel -->
  <div id="rp" class="a" style="left:744px;top:23px;width:241px;height:376px;background:#2d2d2d;">
    <div class="a" style="left:0;top:2px;width:241px;height:16px;background:#3b3b3b;"></div>
    <div class="a" style="left:0;top:2px;width:34px;height:16px;background:#2f2f2f;"></div>
    <div class="vt" id="t_layers" style="transform:scaleX(0.932);transform-origin:0 0;left:3px;top:6.3px;font-weight:bold;color:#5b9bc4;font-size:9.4px;letter-spacing:-0.15px;">Layers</div>
    <div class="vt" id="t_stats" style="transform:scaleX(0.985);transform-origin:0 0;left:38px;top:6.3px;font-weight:bold;color:#e0e0e0;font-size:9.4px;letter-spacing:-0.15px;">Stats</div>
    <div class="vt" id="t_log" style="transform:scaleX(0.829);transform-origin:0 0;left:67.5px;top:6.3px;font-weight:bold;color:#e0e0e0;font-size:9.4px;letter-spacing:-0.15px;">Log</div>

    <svg width="190" height="26" style="left:0;top:20px;" viewBox="0 0 190 26" fill="none" stroke-linejoin="round">
      <g stroke="#ececec" stroke-width="1.5" fill="none"><path d="M6.8 10 L12 14.8 H21.8 L23.6 13"/><path d="M6.8 14.6 L12 19.4 H21.8"/></g>
      <circle cx="15.2" cy="8.8" r="4.8" fill="#2c4a30"/><path d="M15.2 5.2 V12.4 M11.6 8.8 H18.8" stroke="#a6e0a6" stroke-width="2"/><path d="M22 19.6 H26.4 L24.2 22.2 Z" fill="#ececec"/>
      <g stroke="#4f4f4f" stroke-width="1.5" fill="none"><path d="M32.8 10 L38 14.8 H47.8 L49.6 13"/><path d="M32.8 14.6 L38 19.4 H47.8"/></g>
      <path d="M38.6 5.6 L43.4 10.4 M43.4 5.6 L38.6 10.4" stroke="#565656" stroke-width="1.5"/>
      <g stroke="#ececec" stroke-width="1.5" fill="none"><path d="M59.199999999999996 10 L64.4 14.8 H74.2 L76.0 13"/><path d="M59.199999999999996 14.6 L64.4 19.4 H74.2 L76.0 17.6"/></g>
      <rect x="63.8" y="4.8" width="8" height="7.6" rx="1.6" fill="#26466c" stroke="#a9c9e8" stroke-width="1.2"/><path d="M66 5.4 V8 H69.6 V5.4 M66 11.8 V10 H69.6 V11.8" stroke="#cfe2f4" stroke-width="0.9"/>
      <g stroke="#ececec" stroke-width="1.5" fill="none"><path d="M85.2 10 L90.4 14.8 H100.2 L102.0 13"/><path d="M85.2 14.6 L90.4 19.4 H100.2 L102.0 17.6"/></g>
      <path d="M89.6 5.6 H93 L94 6.8 H98.4 V12.4 H89.6 Z" fill="#2c7f86" stroke="#8fd4d8" stroke-width="1.1"/>
      <g fill="#ececec"><rect x="112.3" y="8" width="2.3" height="2.3"/><rect x="112.3" y="12.6" width="2.3" height="2.3"/><rect x="112.3" y="17.2" width="2.3" height="2.3"/><rect x="117.4" y="8.3" width="10.6" height="1.7"/><rect x="117.4" y="12.9" width="10.6" height="1.7"/><rect x="117.4" y="17.5" width="10.6" height="1.7"/><path d="M126.4 20.4 H130.8 L128.6 23 Z"/></g>
      <path d="M143.4 13 C146.6 9.2 152 10.4 153.2 17.4" stroke="#f2f2f2" stroke-width="2.5"/><path d="M139.4 10.2 L146.6 9.6 L144 16.4 Z" fill="#f2f2f2"/>
      <path d="M176 13 C172.8 9.2 167.4 10.4 166.2 17.4" stroke="#484848" stroke-width="2.5"/><path d="M180 10.2 L172.8 9.6 L175.4 16.4 Z" fill="#484848"/>
    </svg>
    <div id="lyr" class="a" style="left:3px;top:46px;width:235px;height:88px;background:#383838;"></div>
    <div class="a" style="left:3px;top:46.5px;width:235px;height:14.6px;border-top:1px solid #323232;box-sizing:border-box;"></div><div class="vt" id="t_l0" style="transform:scaleX(0.947);transform-origin:0 0;left:52.2px;top:48.9px;font-size:10px;letter-spacing:-0.15px;color:#6b6b6b;">Stamp</div><svg width="12" height="8" style="left:5px;top:49.8px;" viewBox="0 0 12 8"><ellipse cx="6" cy="4" rx="3.8" ry="2.2" fill="none" stroke="#474747" stroke-width="1"/><path d="M2.5 7 L9.5 1" stroke="#474747" stroke-width="1"/></svg><svg width="13" height="13" style="left:35.7px;top:47.8px;" viewBox="0 0 13 13" fill="none" stroke="#4d4d4d" stroke-width="1.1"><rect x="0.7" y="0.7" width="11.6" height="11.6"/><path d="M3.5 3 V8.5 M3.5 9.8 H9"/></svg>
    <div class="a" style="left:3px;top:61.1px;width:235px;height:14.6px;border-top:1px solid #323232;box-sizing:border-box;"></div><div class="vt" id="t_l1" style="transform:scaleX(0.987);transform-origin:0 0;left:51.9px;top:63.5px;font-size:10px;letter-spacing:-0.15px;color:#dadada;">Display Correction</div><svg width="12" height="8" style="left:5px;top:64.4px;" viewBox="0 0 12 8"><ellipse cx="6" cy="4" rx="4.4" ry="2.7" fill="#d6d6d6"/><ellipse cx="6" cy="4.1" rx="1.9" ry="1.4" fill="#555"/></svg><svg width="13" height="13" style="left:35.7px;top:62.4px;" viewBox="0 0 13 13"><rect x="0.7" y="0.7" width="11.6" height="11.6" fill="#2b2b2b" stroke="#e4e4e4" stroke-width="1.3"/><path d="M2.6 10.6 C3 5.5 6 3 10.4 2.6" fill="none" stroke="#e4e4e4" stroke-width="1.2"/></svg>
    <div class="a" style="left:3px;top:75.7px;width:235px;height:14.6px;border-top:1px solid #323232;box-sizing:border-box;"></div><div class="vt" id="t_l2" style="transform:scaleX(0.921);transform-origin:0 0;left:68px;top:78.1px;font-size:10px;letter-spacing:-0.15px;color:#6b6b6b;">Lens Effects</div><svg width="12" height="8" style="left:5px;top:79.0px;" viewBox="0 0 12 8"><ellipse cx="6" cy="4" rx="3.8" ry="2.2" fill="none" stroke="#474747" stroke-width="1"/><path d="M2.5 7 L9.5 1" stroke="#474747" stroke-width="1"/></svg><svg width="13" height="13" style="left:51.5px;top:77.0px;" viewBox="0 0 13 13" fill="none" stroke="#4d4d4d" stroke-width="1.1"><rect x="0.7" y="0.7" width="11.6" height="11.6"/><path d="M6.5 3.5 V9.5 M3.5 6.5 H9.5"/></svg>
    <div class="a" style="left:3px;top:90.3px;width:235px;height:14.6px;border-top:1px solid #323232;box-sizing:border-box;"></div><div class="vt" id="t_l3" style="transform:scaleX(0.966);transform-origin:0 0;left:68px;top:92.7px;font-size:10px;letter-spacing:-0.15px;color:#6b6b6b;">Sharpen/Blur</div><svg width="12" height="8" style="left:5px;top:93.6px;" viewBox="0 0 12 8"><ellipse cx="6" cy="4" rx="3.8" ry="2.2" fill="none" stroke="#474747" stroke-width="1"/><path d="M2.5 7 L9.5 1" stroke="#474747" stroke-width="1"/></svg><svg width="13" height="13" style="left:51.5px;top:91.6px;" viewBox="0 0 13 13" fill="none" stroke="#4d4d4d" stroke-width="1.1"><rect x="0.7" y="0.7" width="11.6" height="11.6"/><path d="M4 9 V5.5 M4 9 H7.5"/></svg>
    <div class="a" style="left:3px;top:104.9px;width:235px;height:14.6px;border-top:1px solid #323232;box-sizing:border-box;"></div><div class="vt" id="t_l4" style="transform:scaleX(0.966);transform-origin:0 0;left:68px;top:107.3px;font-size:10px;letter-spacing:-0.15px;color:#6b6b6b;">Denoiser: unavailable</div><svg width="12" height="8" style="left:5px;top:108.2px;" viewBox="0 0 12 8"><ellipse cx="6" cy="4" rx="3.8" ry="2.2" fill="none" stroke="#474747" stroke-width="1"/><path d="M2.5 7 L9.5 1" stroke="#474747" stroke-width="1"/></svg><svg width="13" height="13" style="left:51.5px;top:106.2px;" viewBox="0 0 13 13" fill="none" stroke="#4d4d4d" stroke-width="1.1"><rect x="0.7" y="0.7" width="11.6" height="11.6"/><path d="M6.5 2 V11"/></svg>
    <div class="a" style="left:3px;top:119.5px;width:235px;height:14.6px;border-top:1px solid #323232;box-sizing:border-box;"></div><div class="vt" id="t_l5" style="transform:scaleX(0.888);transform-origin:0 0;left:68px;top:121.9px;font-size:10px;letter-spacing:-0.15px;color:#dadada;">Source: RGB</div><svg width="12" height="8" style="left:5px;top:122.8px;" viewBox="0 0 12 8"><ellipse cx="6" cy="4" rx="4.4" ry="2.7" fill="#d6d6d6"/><ellipse cx="6" cy="4.1" rx="1.9" ry="1.4" fill="#555"/></svg><svg width="13" height="13" style="left:51.5px;top:120.8px;" viewBox="0 0 13 13"><rect x="0.6" y="0.6" width="11.8" height="11.8" fill="#274a73" stroke="#8fc0dd" stroke-width="1.2"/><circle cx="6.5" cy="4.8" r="2.6" fill="#e9e4d8"/><circle cx="4.6" cy="8" r="2.6" fill="#e0603c"/><circle cx="8.4" cy="8" r="2.6" fill="#4fae8c"/></svg>
    <div class="a" style="left:0;top:262.6px;width:241px;height:1px;background:#404040;"></div>
    <svg width="20" height="4" style="left:110.5px;top:260.6px;" viewBox="0 0 20 4"><path d="M0 2 H20" stroke="#8a8a8a" stroke-width="1.3" stroke-dasharray="1 1"/></svg>
    <div class="a" style="left:0;top:265px;width:241px;height:16px;background:#3a3a3a;"></div>
    <div class="a" style="left:0;top:265px;width:50px;height:16px;background:#2f2f2f;"></div>
    <div class="vt" id="t_props" style="transform:scaleX(0.979);transform-origin:0 0;left:4.6px;top:268px;font-weight:bold;color:#5b9bc4;font-size:9.4px;letter-spacing:-0.15px;">Properties</div>
  </div>
  <div class="a" style="left:985px;top:23px;width:6px;height:376px;background:#383838;"></div>
</div>
<div class="a" style="left:923px;top:580px;width:5px;height:3px;background:#777;border-radius:2px 2px 0 0;"></div><div class="a" style="left:931px;top:579.5px;width:9px;height:4px;background:#e8e8e8;border-radius:4px 4px 0 0;"></div><div class="a" style="left:948px;top:579.5px;width:4px;height:4px;background:#e8e8e8;border-radius:1px;"></div><div class="a" style="left:966px;top:580px;width:5px;height:3px;background:#e8e8e8;border-radius:1px;"></div>
<!-- ===== annotations ===== -->
<svg id="anno" width="1000" height="582" style="left:0;top:0;" viewBox="0 0 1000 582">
  <rect x="273.6" y="90.4" width="35.9" height="20.6" fill="none" stroke="#d94f3c" stroke-width="4.7"/>
  <path d="M553 103.6 L335 103.4" stroke="#c9503f" stroke-width="2.6" fill="none"/>
  <path d="M320.5 102.8 L334.5 95.8 L335.5 110.4 Z" fill="#d9493c" fill-opacity="0.92"/>
  <path d="M320.4 313.8 L93 209.6" stroke="#c54a45" stroke-width="2.7" fill="none" stroke-linecap="round" stroke-opacity="0.93"/>
  <path d="M79.8 205.6 L96.8 206.8 L91 220.4 Z" fill="#e2513c" fill-opacity="0.95"/>
</svg>
</div>
</body>
</html>
